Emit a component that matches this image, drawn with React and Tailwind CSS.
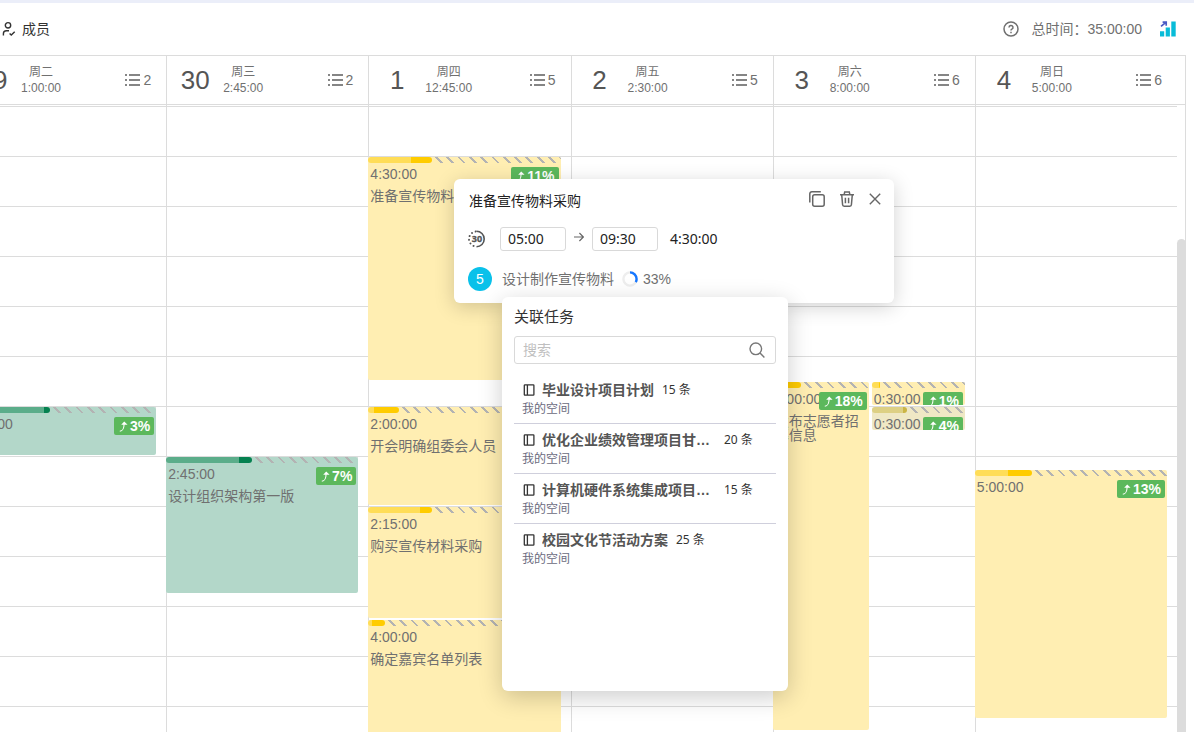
import clsx from 'clsx';

const HOUR_HEIGHT = 50;
const FIRST_HOUR = 4;
const HOURS = Array.from({ length: 20 }, (_, i) => FIRST_HOUR + i);

const themes = {
  green: { card: 'bg-[#b3d7c9]', spent: 'bg-[#5bad8a]', current: 'bg-[#058150]' },
  yellow: { card: 'bg-[#ffeeb2]', spent: 'bg-[#ffdd57]', current: 'bg-[#ffcc00]' },
  muted: { card: 'bg-[#efe8c5]', spent: 'bg-[#ddd084]', current: 'bg-[#cbb545]' },
};

// start and length are in hours, spent and current in percent of the bar
const days = [
  {
    date: '29', weekday: '周二', total: '1:00:00', count: 2,
    events: [
      { start: 10, length: 1, time: '1:00:00', title: '', percent: '3%', spent: 41.6, current: 3.2, theme: 'green' },
    ],
  },
  {
    date: '30', weekday: '周三', total: '2:45:00', count: 2,
    events: [
      { start: 11, length: 2.75, time: '2:45:00', title: '设计组织架构第一版', percent: '7%', spent: 38, current: 6.8, theme: 'green' },
    ],
  },
  {
    date: '1', weekday: '周四', total: '12:45:00', count: 5,
    events: [
      { start: 5, length: 4.5, time: '4:30:00', title: '准备宣传物料采购', percent: '11%', spent: 22.2, current: 11, theme: 'yellow' },
      { start: 10, length: 2, time: '2:00:00', title: '开会明确组委会人员', percent: '13%', spent: 3, current: 13, theme: 'yellow' },
      { start: 12, length: 2.25, time: '2:15:00', title: '购买宣传材料采购', percent: '6%', spent: 27, current: 6.2, theme: 'yellow' },
      { start: 14.25, length: 4, time: '4:00:00', title: '确定嘉宾名单列表', percent: '7%', spent: 2, current: 6.8, theme: 'yellow' },
    ],
  },
  { date: '2', weekday: '周五', total: '2:30:00', count: 5, events: [] },
  {
    date: '3', weekday: '周六', total: '8:00:00', count: 6,
    events: [
      { start: 9.5, length: 7, time: '7:00:00', title: '发布志愿者招募信息', percent: '18%', spent: 11, current: 18, theme: 'yellow', half: 'left' },
      { start: 9.5, length: 0.5, time: '0:30:00', title: '', percent: '1%', spent: 7.5, current: 1.1, theme: 'yellow', half: 'right' },
      { start: 10, length: 0.5, time: '0:30:00', title: '', percent: '4%', spent: 33.5, current: 4, theme: 'muted', half: 'right' },
    ],
  },
  {
    date: '4', weekday: '周日', total: '5:00:00', count: 6,
    events: [
      { start: 11.25, length: 5, time: '5:00:00', title: '', percent: '13%', spent: 17, current: 12.6, theme: 'yellow' },
    ],
  },
];

const projects = [
  { name: '毕业设计项目计划', count: 15 },
  { name: '优化企业绩效管理项目甘特图', count: 20 },
  { name: '计算机硬件系统集成项目计划', count: 15 },
  { name: '校园文化节活动方案', count: 25 },
];

function MemberIcon() {
  return (
    <svg className="size-4 shrink-0" viewBox="0 0 16 16" fill="none" stroke="currentColor" strokeWidth="1.4">
      <circle cx="8" cy="4.3" r="2.7" />
      <path d="M3.4 14.5v-1.8c0-1.8 1.2-2.9 3-2.9h2.6" />
      <path d="M9.6 12.4l1.7 1.7 3.4-3.4" />
    </svg>
  );
}

function HelpIcon() {
  return (
    <svg className="size-4" viewBox="0 0 16 16" fill="none" stroke="currentColor" strokeWidth="1.5">
      <circle cx="8" cy="8" r="7" />
      <path d="M6 6.4a2 2 0 1 1 2.9 1.8c-.6.3-.9.6-.9 1.4" />
      <path d="M8 10.8v1.4" />
    </svg>
  );
}

function ChartIcon() {
  return (
    <svg className="size-4" viewBox="0 0 16 16">
      <path d="M0 10.3h4.2v5.2H0zM5.7 6.5h4.2v9H5.7zM11.3.5h4.4v15h-4.4z" fill="#08bcd8" />
      <path d="M1 5.4L5.6 1.6M2.6 1.2h3.6v3.6" fill="none" stroke="#4a5bc4" strokeWidth="1.7" />
    </svg>
  );
}

function ListIcon() {
  return (
    <svg className="h-[13px] w-[15px]" viewBox="0 0 15 13" fill="currentColor">
      <path d="M0 0h2v2H0zM4 0h11v2H4zM0 5h2v2H0zM4 5h11v2H4zM0 10h2v2H0zM4 10h11v2H4z" opacity=".85" />
    </svg>
  );
}

function TrendIcon() {
  return (
    <svg className="size-[11px]" viewBox="0 0 11 11">
      <path d="M1.8 10.2C4.8 9.8 6 8.4 6.1 3" fill="none" stroke="currentColor" strokeWidth="1.1" />
      <path d="M6.2 .4l3.4 3.4H3.2z" fill="currentColor" />
    </svg>
  );
}

function DurationIcon() {
  return (
    <svg className="size-[18px]" viewBox="0 0 18 18" fill="none" stroke="currentColor" strokeWidth="1.6">
      <path d="M8.5 1.3a7.7 7.7 0 0 1 0 15.4" />
      <path d="M8.5 16.5a7.5 7.5 0 0 1 0-15" strokeDasharray="0.1 3.8" strokeDashoffset="-3" strokeLinecap="round" strokeWidth="1.9" />
      <text x="9" y="12.4" textAnchor="middle" className="font-sans text-[9px] font-bold" fill="currentColor" stroke="currentColor" strokeWidth=".3">30</text>
    </svg>
  );
}

function CopyIcon() {
  return (
    <svg className="size-4" viewBox="0 0 16 16" fill="none" stroke="currentColor" strokeWidth="1.5">
      <rect x="3.7" y="3.7" width="11.5" height="11.5" rx="2" />
      <path d="M.8 11.5V2.8a2 2 0 0 1 2-2h9" />
    </svg>
  );
}

function TrashIcon() {
  return (
    <svg className="size-4" viewBox="0 0 16 16" fill="none" stroke="currentColor" strokeWidth="1.5">
      <path d="M1 3.8h14M5.2 3.4l.5-2.5h4.6l.5 2.5M2.7 3.8l.9 10a1.5 1.5 0 0 0 1.5 1.4h5.8a1.5 1.5 0 0 0 1.5-1.4l.9-10" />
      <path d="M6.4 6.8v5.4M9.6 6.8v5.4" />
    </svg>
  );
}

function CloseIcon() {
  return (
    <svg className="size-3" viewBox="0 0 12 12" fill="none" stroke="currentColor" strokeWidth="1.4">
      <path d="M.8.8l10.4 10.4M11.2.8L.8 11.2" />
    </svg>
  );
}

function ArrowIcon() {
  return (
    <svg className="h-3 w-2.5" viewBox="0 0 10 12" fill="none" stroke="currentColor" strokeWidth="1.2">
      <path d="M0 6h9.2M5.4 2l4 4-4 4" />
    </svg>
  );
}

function SearchIcon() {
  return (
    <svg className="size-4" viewBox="0 0 16 16" fill="none" stroke="currentColor" strokeWidth="1.4">
      <circle cx="6.8" cy="6.8" r="5.8" />
      <path d="M11 11l4.4 4.4" />
    </svg>
  );
}

function ProjectIcon() {
  return (
    <svg className="size-3 shrink-0" viewBox="0 0 12 12" fill="none" stroke="currentColor" strokeWidth="1.3">
      <rect x="1.3" y=".9" width="9.6" height="10.2" rx=".6" />
      <path d="M4.4 1v10" />
    </svg>
  );
}

function ProgressRing() {
  return (
    <svg className="size-4 -rotate-90" viewBox="0 0 16 16" fill="none" strokeWidth="2.4">
      <circle cx="8" cy="8" r="6.6" stroke="#eeeeee" />
      <circle cx="8" cy="8" r="6.6" stroke="#1677ff" pathLength="100" strokeDasharray="33 67" />
    </svg>
  );
}

function EventCard({ event }) {
  const theme = themes[event.theme];
  const top = Math.round((event.start - FIRST_HOUR) * HOUR_HEIGHT) + 1;
  const bottom = Math.round((event.start + event.length - FIRST_HOUR) * HOUR_HEIGHT) - 1;

  return (
    <article
      className={clsx(
        'absolute overflow-hidden rounded-xs text-sm text-[#707070]',
        theme.card,
        !event.half && 'inset-x-0',
        event.half === 'left' && 'left-0 w-1/2',
        event.half === 'right' && 'right-0 left-1/2 ml-[3px]',
      )}
      style={{ top, height: bottom - top }}
    >
      <div className="flex h-1.5">
        <div className={clsx('rounded-l-full', theme.spent)} style={{ width: `${event.spent}%` }} />
        <div className={clsx('rounded-r-full', theme.current)} style={{ width: `${event.current}%` }} />
        <div className="flex-1 bg-[repeating-linear-gradient(45deg,transparent_0px,transparent_6px,#b3b3b3_6px,#b3b3b3_8px)]" />
      </div>
      <div className="pl-0.5">
        <p className="leading-[22px]">{event.time}</p>
        <p className="mt-1 leading-[14px]">{event.title}</p>
      </div>
      <span className="absolute top-[10px] right-0.5 flex h-[18px] items-center gap-px rounded-xs bg-[#5cb85c] px-1 leading-[18px] font-bold text-white">
        <TrendIcon />
        {event.percent}
      </span>
    </article>
  );
}

function DayHeader({ day }) {
  return (
    <div className="flex h-12 min-w-0 flex-1 items-center border-l border-[#dcdcdc] pr-[15px] pl-[13px] text-[#707070]">
      <span className="w-[30px] text-center text-[26px] text-[#555]">{day.date}</span>
      <div className="ml-[13px] text-center text-xs leading-4">
        <div>{day.weekday}</div>
        <div>{day.total}</div>
      </div>
      <div className="ml-auto flex items-center gap-[3px] text-sm">
        <ListIcon />
        {day.count}
      </div>
    </div>
  );
}

function DayColumn({ day }) {
  return (
    <div className="relative min-w-0 flex-1 border-l border-[#dcdcdc] pt-px">
      {HOURS.map((hour) => (
        <div key={hour} className="h-[50px] border-t border-[#dcdcdc]" />
      ))}
      <div className="absolute top-px right-[10px] bottom-0 -left-px">
        {day.events.map((event, i) => (
          <EventCard key={i} event={event} />
        ))}
      </div>
    </div>
  );
}

function EventPopover() {
  return (
    <section className="absolute top-[179px] left-[454px] w-[440px] rounded-md bg-white py-3 pr-3 pl-3.5 text-sm text-[#222] shadow-[0_4px_20px_rgba(0,0,0,0.18)]">
      <div className="flex h-5 items-center">
        <h2 className="pl-px">准备宣传物料采购</h2>
        <div className="-mt-1 ml-auto flex items-center gap-3.5 text-[#666]">
          <button type="button" aria-label="复制"><CopyIcon /></button>
          <button type="button" aria-label="删除"><TrashIcon /></button>
          <button type="button" aria-label="关闭" className="pr-px"><CloseIcon /></button>
        </div>
      </div>
      <div className="mt-4 flex h-6 items-center font-['Noto_Sans','Noto_Sans_CJK_SC',sans-serif]">
        <span className="mr-3.5 text-[#555]"><DurationIcon /></span>
        <input aria-label="开始时间" defaultValue="05:00" className="h-6 w-[66px] rounded-[3px] border border-[#d9d9d9] px-[7px] pb-px" />
        <span className="mx-2 mb-1 text-[#666]"><ArrowIcon /></span>
        <input aria-label="结束时间" defaultValue="09:30" className="h-6 w-[66px] rounded-[3px] border border-[#d9d9d9] px-[7px] pb-px" />
        <span className="ml-3">4:30:00</span>
      </div>
      <div className="mt-4 flex h-6 items-center text-[#707070]">
        <span className="flex size-6 items-center justify-center rounded-full bg-[#0ac1ea] text-white">5</span>
        <span className="mr-2 ml-2.5">设计制作宣传物料</span>
        <ProgressRing />
        <span className="ml-[5px]">33%</span>
      </div>
    </section>
  );
}

function TaskPanel() {
  return (
    <section className="absolute top-[297px] left-[502px] h-[394px] w-[286px] rounded-md bg-white px-3 pt-2.5 shadow-[0_6px_24px_rgba(0,0,0,0.2)]">
      <h2 className="text-[15px] leading-5 text-[#333]">关联任务</h2>
      <label className="mt-[9px] flex h-7 items-center rounded-[3px] border border-[#d9d9d9] pr-2.5 pl-2 text-[#777]">
        <input type="search" aria-label="搜索" placeholder="搜索" className="min-w-0 flex-1 text-sm outline-none placeholder:text-[#bfbfbf]" />
        <SearchIcon />
      </label>
      <ul className="mt-2.5">
        {projects.map((project) => (
          <li key={project.name} className="h-[50px] border-b border-[#cfcfdc] pt-1.5 pl-2 last:border-b-0">
            <div className="flex h-5 items-center pl-px text-[#333]">
              <ProjectIcon />
              <strong className="ml-[7px] max-w-[174px] truncate text-sm leading-5 text-[#555]">{project.name}</strong>
              <span className="ml-2 shrink-0 font-['Noto_Sans','Noto_Sans_CJK_SC',sans-serif] text-xs">{project.count} 条</span>
            </div>
            <p className="text-xs leading-[18px] text-[#6b6b80]">我的空间</p>
          </li>
        ))}
      </ul>
    </section>
  );
}

export default function App() {
  return (
    <div className="relative flex h-screen flex-col overflow-hidden border-t-3 border-[#ebeef9] bg-white font-['Liberation_Sans','Noto_Sans_CJK_SC',sans-serif]">
      <header className="flex h-[52px] shrink-0 items-center text-sm text-[#707070]">
        <button type="button" className="flex items-center gap-1.5 text-[#333]">
          <MemberIcon />
          成员
        </button>
        <div className="ml-auto flex items-center pr-[18px]">
          <button type="button" aria-label="帮助" className="mr-[13px]"><HelpIcon /></button>
          <span>总时间：</span>
          <span>35:00:00</span>
          <button type="button" aria-label="统计" className="ml-[18px]"><ChartIcon /></button>
        </div>
      </header>

      {/* The week is scrolled slightly sideways, so Tuesday starts off the left edge */}
      <main className="mr-2 -ml-9 flex min-h-0 flex-1 flex-col">
        <div className="flex border-y border-r border-[#dcdcdc]">
          {days.map((day) => (
            <DayHeader key={day.date} day={day} />
          ))}
          <div className="w-2" />
        </div>
        <div className="flex min-h-0 flex-1 overflow-hidden">
          {days.map((day) => (
            <DayColumn key={day.date} day={day} />
          ))}
          <div className="flex w-[9px] border-r border-[#dcdcdc] pt-[134px]">
            <div className="-mr-px flex-1 rounded-t-full bg-[#dcdcdc]" />
          </div>
        </div>
      </main>

      <div className="absolute inset-x-0 -top-[3px]">
        <EventPopover />
        <TaskPanel />
      </div>
    </div>
  );
}
